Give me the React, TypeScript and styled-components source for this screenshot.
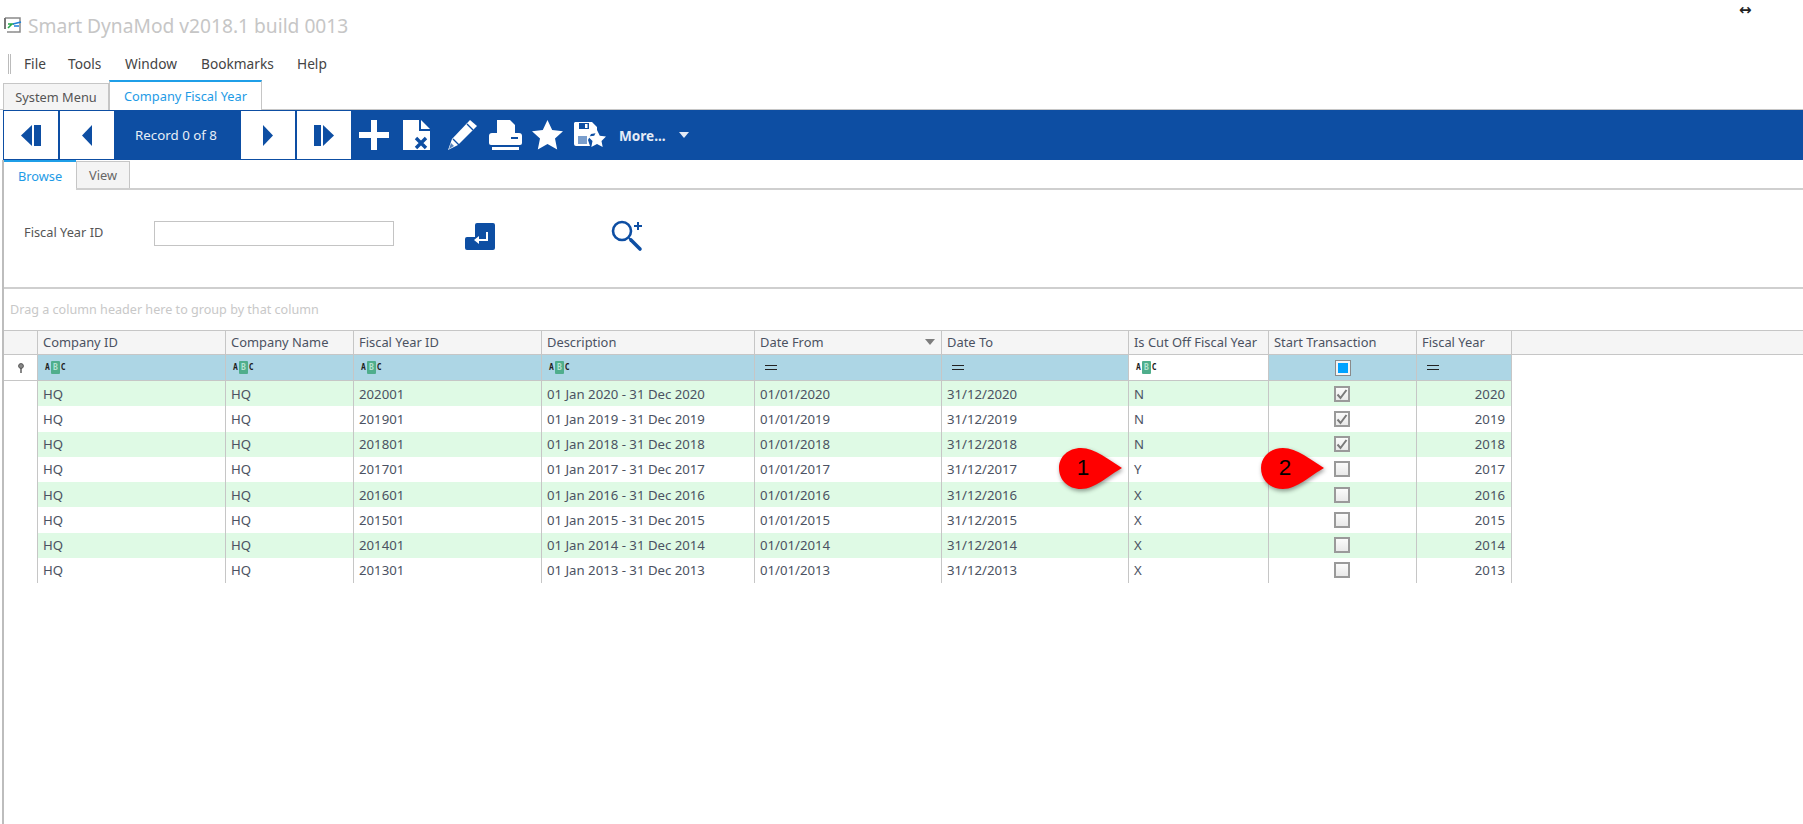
import React from "react";
import styled, { createGlobalStyle } from "styled-components";

const Global = createGlobalStyle`
  html, body { margin: 0; padding: 0; background: #fff; }
  body { font-family: "Noto Sans", "Open Sans", sans-serif; color: #4a4a4a; }
  * { box-sizing: border-box; }
`;

const BLUE = "#0d4ea3";
const LINE = "#c6c6c6";
const COLS = "34px 188px 128px 188px 213px 187px 187px 140px 148px 95px";

const Page = styled.div`
  position: relative;
  width: 1803px;
  height: 824px;
  overflow: hidden;
  display: flex;
  flex-direction: column;
`;

const TitleBar = styled.div`
  height: 50px;
  display: flex;
  align-items: center;
  gap: 5px;
  padding-left: 3px;
  position: relative;
`;
const TitleText = styled.div`
  font-size: 19.2px;
  color: #c6c6c6;
  white-space: nowrap;
`;
const ResizeCursor = styled.div`
  position: absolute;
  left: 1739px;
  top: 0;
  font-family: "DejaVu Sans", sans-serif;
  font-size: 15px;
  line-height: 20px;
  color: #222;
  font-weight: bold;
`;

const MenuBar = styled.div`
  height: 30px;
  display: flex;
  align-items: center;
  padding: 0 0 3px 8px;
`;
const Gripper = styled.div`
  width: 3px;
  height: 20px;
  border-left: 1px solid #bbb;
  border-right: 1px solid #bbb;
  margin-right: 13px;
`;
const MenuItem = styled.div<{ $w: number }>`
  width: ${(p) => p.$w}px;
  font-size: 13.7px;
  color: #444;
`;

const TabStrip = styled.div`
  height: 30px;
  display: flex;
  align-items: flex-end;
  padding-left: 3px;
  border-bottom: 1px solid ${LINE};
`;
const MainTab = styled.div<{ $active?: boolean; $w: number }>`
  width: ${(p) => p.$w}px;
  height: ${(p) => (p.$active ? 30 : 27)}px;
  margin-bottom: -1px;
  background: ${(p) => (p.$active ? "#fff" : "#f4f4f4")};
  border: 1px solid ${LINE};
  border-bottom: none;
  border-top: ${(p) => (p.$active ? "2px solid #1f9fe8" : `1px solid ${LINE}`)};
  color: ${(p) => (p.$active ? "#1e9be6" : "#555")};
  font-size: 12.8px;
  display: flex;
  align-items: center;
  justify-content: center;
`;

const Toolbar = styled.div`
  height: 50px;
  margin-left: 3px;
  padding-left: 1px;
  background: ${BLUE};
  display: flex;
  align-items: center;
`;
const NavButton = styled.div<{ $ml?: number }>`
  width: 54px;
  height: 48px;
  margin-left: ${(p) => p.$ml ?? 0}px;
  background: #fff;
  display: flex;
  align-items: center;
  justify-content: center;
`;
const RecordLabel = styled.div`
  width: 124px;
  margin-right: 3px;
  text-align: center;
  color: #e8eef7;
  font-size: 13.3px;
`;
const ToolIcon = styled.svg<{ $ml: number }>`
  display: block;
  margin-left: ${(p) => p.$ml}px;
  flex: none;
`;
const MoreLabel = styled.div`
  margin-left: 13px;
  color: #e4ebf6;
  font-size: 13.6px;
  font-weight: 700;
  width: 60px;
`;
const MoreArrow = styled.div`
  width: 0;
  height: 0;
  border-left: 5px solid transparent;
  border-right: 5px solid transparent;
  border-top: 6px solid #e4ebf6;
`;

const Content = styled.div`
  flex: 1;
  margin-left: 2px;
  border-left: 2px solid #bdbdbd;
  display: flex;
  flex-direction: column;
`;

const SubTabs = styled.div`
  height: 30px;
  display: flex;
  align-items: flex-end;
  border-bottom: 2px solid #cfcfcf;
`;
const BrowseTab = styled.div`
  width: 72px;
  height: 30px;
  margin-bottom: -2px;
  background: #fff;
  border-top: 2px solid #1f9fe8;
  color: #1e9be6;
  font-size: 12.8px;
  display: flex;
  align-items: center;
  justify-content: center;
`;
const ViewTab = styled.div`
  width: 54px;
  height: 27px;
  background: #f4f4f4;
  border: 1px solid ${LINE};
  border-bottom: none;
  color: #666;
  font-size: 12.8px;
  display: flex;
  align-items: center;
  justify-content: center;
`;

const FilterPanel = styled.div`
  height: 99px;
  padding: 30px 0 0 20px;
  display: flex;
  align-items: flex-start;
  border-bottom: 2px solid #cfcfcf;
`;
const FieldLabel = styled.div`
  width: 130px;
  height: 25px;
  line-height: 24px;
  font-size: 12.8px;
  color: #555;
`;
const FieldInput = styled.div`
  width: 240px;
  height: 25px;
  margin-top: 1px;
  border: 1px solid #c4c4c4;
  background: #fff;
`;
const PanelIcon = styled.svg<{ $ml: number; $mt?: number }>`
  display: block;
  margin-left: ${(p) => p.$ml}px;
  margin-top: ${(p) => p.$mt ?? 0}px;
  flex: none;
`;

const GroupPanel = styled.div`
  height: 41px;
  display: flex;
  align-items: center;
  padding-left: 6px;
  font-size: 12.6px;
  color: #c8c8c8;
`;

const Grid = styled.div`
  position: relative;
`;
const HeaderRow = styled.div`
  display: grid;
  grid-template-columns: ${COLS} 1fr;
  height: 25px;
  background: #f5f5f5;
  border-top: 1px solid ${LINE};
  border-bottom: 1px solid ${LINE};
`;
const HeaderCell = styled.div`
  border-right: 1px solid ${LINE};
  padding: 0 6px 2px 5px;
  font-size: 12.9px;
  color: #4b5262;
  white-space: nowrap;
  display: flex;
  align-items: center;
  justify-content: space-between;
`;
const SortArrow = styled.div`
  width: 0;
  height: 0;
  border-left: 5px solid transparent;
  border-right: 5px solid transparent;
  border-top: 6px solid #7d7d7d;
`;
const FilterRow = styled.div`
  display: grid;
  grid-template-columns: ${COLS};
  width: 1508px;
  height: 26px;
  border-bottom: 1px solid ${LINE};
`;
const FilterCell = styled.div<{ $white?: boolean; $center?: boolean }>`
  background: ${(p) => (p.$white ? "#fff" : "#add6e5")};
  border-right: 1px solid ${LINE};
  padding-left: ${(p) => (p.$center ? 0 : 7)}px;
  display: flex;
  align-items: center;
  justify-content: ${(p) => (p.$center ? "center" : "flex-start")};
`;
const AbcBadge = styled.div`
  display: flex;
  align-items: center;
  font-family: "DejaVu Sans Mono", monospace;
  font-size: 8px;
  font-weight: 700;
  color: #222;
  line-height: 1;
`;
const AbcMiddle = styled.span`
  width: 9px;
  height: 13px;
  margin: 0 1px;
  background: #4fae8c;
  color: #b5e2d2;
  border-radius: 1px;
  display: flex;
  align-items: center;
  justify-content: center;
`;
const EqualsIcon = styled.div`
  width: 12px;
  height: 5px;
  margin-left: 3px;
  border-top: 1.5px solid #222;
  border-bottom: 1.5px solid #222;
`;
const DataRow = styled.div`
  display: grid;
  grid-template-columns: ${COLS};
  width: 1508px;
  height: 25.25px;
`;
const DataCell = styled.div<{ $odd: boolean; $right?: boolean; $center?: boolean }>`
  background: ${(p) => (p.$odd ? "#dffae5" : "#fff")};
  border-right: 1px solid ${LINE};
  padding: 0 6px 0 5px;
  font-size: 13.2px;
  color: #4b5262;
  white-space: nowrap;
  display: flex;
  align-items: center;
  justify-content: ${(p) => (p.$right ? "flex-end" : p.$center ? "center" : "flex-start")};
`;
const IndicatorCell = styled.div`
  background: #fff;
  border-right: 1px solid ${LINE};
`;
const CheckBox = styled.div`
  width: 16px;
  height: 16px;
  border: 2px solid #9a9a9a;
  background: linear-gradient(#fbfbfb, #e9e9e9);
  display: flex;
  align-items: center;
  justify-content: center;
`;
const FilterCheck = styled.div`
  width: 16px;
  height: 16px;
  border: 1px solid #8a8a8a;
  background: #f4f4f4;
  display: flex;
  align-items: center;
  justify-content: center;
`;
const FilterCheckFill = styled.div`
  width: 10px;
  height: 10px;
  background: #00a2ff;
`;

const Callout = styled.div<{ $left: number }>`
  position: absolute;
  left: ${(p) => p.$left}px;
  top: 118px;
  width: 64px;
  height: 44px;
`;
const CalloutShape = styled.svg`
  position: absolute;
  inset: 0;
  filter: drop-shadow(1px 2px 2px rgba(0, 0, 0, 0.4));
`;
const CalloutNumber = styled.div`
  position: absolute;
  left: 0;
  top: 0;
  width: 48px;
  height: 40px;
  display: flex;
  align-items: center;
  justify-content: center;
  font-family: "Liberation Sans", sans-serif;
  font-size: 22.5px;
  color: #000;
`;

const columns = [
  "Company ID",
  "Company Name",
  "Fiscal Year ID",
  "Description",
  "Date From",
  "Date To",
  "Is Cut Off Fiscal Year",
  "Start Transaction",
  "Fiscal Year",
];

const rows = [
  { y: 2020, cut: "N", on: true },
  { y: 2019, cut: "N", on: true },
  { y: 2018, cut: "N", on: true },
  { y: 2017, cut: "Y", on: false },
  { y: 2016, cut: "X", on: false },
  { y: 2015, cut: "X", on: false },
  { y: 2014, cut: "X", on: false },
  { y: 2013, cut: "X", on: false },
];

const AppLogo = () => (
  <svg width="20" height="20" viewBox="0 0 20 20">
    <path d="M2 3h15v14H4" fill="#fff" stroke="#8a8a8a" strokeWidth="1.5" />
    <path d="M2 3v11" stroke="#777" strokeWidth="2" fill="none" />
    <path d="M5 9h6M5 13l4-4" stroke="#27a84a" strokeWidth="1.6" fill="none" />
    <path d="M10 9l8-2M11 11l5 0" stroke="#1f7fd6" strokeWidth="1.6" fill="none" />
    <path d="M5 17h10" stroke="#aaa" strokeWidth="1.5" strokeDasharray="2 2" fill="none" />
  </svg>
);

const NavIcon = ({ dir, bar }: { dir: "l" | "r"; bar?: boolean }) => (
  <svg width="20" height="21" viewBox="0 0 20 21">
    {dir === "l" ? (
      <>
        <path d={bar ? "M11 0v21L0 10.5z" : "M15 0v21L5 10.5z"} fill={BLUE} />
        {bar && <rect x="13" y="0" width="7" height="21" fill={BLUE} />}
      </>
    ) : (
      <>
        <path d={bar ? "M9 0v21l11-10.5z" : "M5 0v21l10-10.5z"} fill={BLUE} />
        {bar && <rect x="0" y="0" width="7" height="21" fill={BLUE} />}
      </>
    )}
  </svg>
);

const Check = () => (
  <svg width="12" height="12" viewBox="0 0 12 12">
    <path d="M1.5 6.5l3 3.5 6-8" fill="none" stroke="#7a7a7a" strokeWidth="2" />
  </svg>
);

const Abc = () => (
  <AbcBadge>
    <span>A</span>
    <AbcMiddle>B</AbcMiddle>
    <span>C</span>
  </AbcBadge>
);

const Teardrop = () => (
  <CalloutShape width="64" height="44" viewBox="0 0 64 44">
    <path
      d="M22 0C36 0 50 12 63 20C50 27 36 41 22 41C9 41 0 32 0 20C0 9 9 0 22 0Z"
      fill="#ff0000"
    />
  </CalloutShape>
);

export default function App() {
  return (
    <Page>
      <Global />
      <TitleBar>
        <AppLogo />
        <TitleText>Smart DynaMod v2018.1 build 0013</TitleText>
        <ResizeCursor>↔</ResizeCursor>
      </TitleBar>
      <MenuBar>
        <Gripper />
        <MenuItem $w={44}>File</MenuItem>
        <MenuItem $w={57}>Tools</MenuItem>
        <MenuItem $w={76}>Window</MenuItem>
        <MenuItem $w={96}>Bookmarks</MenuItem>
        <MenuItem $w={40}>Help</MenuItem>
      </MenuBar>
      <TabStrip>
        <MainTab $w={106}>System Menu</MainTab>
        <MainTab $active $w={153}>Company Fiscal Year</MainTab>
      </TabStrip>
      <Toolbar>
        <NavButton><NavIcon dir="l" bar /></NavButton>
        <NavButton $ml={2}><NavIcon dir="l" /></NavButton>
        <RecordLabel>Record 0 of 8</RecordLabel>
        <NavButton><NavIcon dir="r" /></NavButton>
        <NavButton $ml={2}><NavIcon dir="r" bar /></NavButton>
        <ToolIcon $ml={7} width="32" height="32" viewBox="0 0 32 32">
          <path d="M13 1h6v12h12v6H19v12h-6V19H1v-6h12z" fill="#fff" />
        </ToolIcon>
        <ToolIcon $ml={12} width="29" height="32" viewBox="0 0 29 32">
          <path d="M1 1h16v11h11v19H1z" fill="#fff" />
          <path d="M19 1l9 9h-9z" fill="#fff" />
          <path d="M14 19l10 10M24 19L14 29" stroke={BLUE} strokeWidth="3.4" fill="none" />
        </ToolIcon>
        <ToolIcon $ml={15} width="32" height="32" viewBox="0 0 32 32">
          <path d="M24 1l7 6L12 26 2 31l4-11z" fill="#fff" />
          <path d="M7 20l6 6M21 5l6 6" stroke={BLUE} strokeWidth="1.4" fill="none" />
          <path d="M5 24l3 3-5 3z" fill={BLUE} opacity="0.7" />
        </ToolIcon>
        <ToolIcon $ml={11} width="33" height="32" viewBox="0 0 33 32">
          <path d="M8 1h13l5 5v8H8z" fill="#fff" />
          <path d="M3 14h27a3 3 0 0 1 3 3v7a2 2 0 0 1-2 2H2a2 2 0 0 1-2-2v-7a3 3 0 0 1 3-3z" fill="#fff" />
          <rect x="22" y="18" width="7" height="2" fill={BLUE} />
          <rect x="3" y="28" width="27" height="3" fill="#fff" />
        </ToolIcon>
        <ToolIcon $ml={10} width="31" height="30" viewBox="0 0 31 30">
          <path d="M15.5 0l4.7 10 10.8 1.3-8 7.3 2.2 10.9-9.7-5.5-9.7 5.5L8 18.6 0 11.3 10.8 10z" fill="#fff" />
        </ToolIcon>
        <ToolIcon $ml={11} width="32" height="26" viewBox="0 0 32 26">
          <path d="M1 0h17l5 5v6l-6 1-3 6 2 6H2a2 2 0 0 1-2-2V1z" fill="#fff" />
          <rect x="5" y="1" width="10" height="6" fill={BLUE} />
          <rect x="11" y="2" width="2.5" height="4" fill="#fff" />
          <rect x="4" y="14" width="9" height="8" fill={BLUE} opacity="0.55" />
          <path d="M23 8l2.8 5.8 6.2.8-4.5 4.3 1.2 6.1-5.7-3.1-5.7 3.1 1.2-6.1-4.5-4.3 6.2-.8z" fill="#fff" />
        </ToolIcon>
        <MoreLabel>More...</MoreLabel>
        <MoreArrow />
      </Toolbar>
      <Content>
        <SubTabs>
          <BrowseTab>Browse</BrowseTab>
          <ViewTab>View</ViewTab>
        </SubTabs>
        <FilterPanel>
          <FieldLabel>Fiscal Year ID</FieldLabel>
          <FieldInput />
          <PanelIcon $ml={71} $mt={3} width="30" height="27" viewBox="0 0 30 27">
            <path d="M10 2a2 2 0 0 1 2-2h16a2 2 0 0 1 2 2v23a2 2 0 0 1-2 2H2a2 2 0 0 1-2-2v-9a2 2 0 0 1 2-2h8z" fill={BLUE} />
            <path d="M22 9v8H12" fill="none" stroke="#fff" strokeWidth="2" />
            <path d="M14 13l-5 4 5 4z" fill="#fff" />
          </PanelIcon>
          <PanelIcon $ml={116} width="32" height="32" viewBox="0 0 32 32">
            <circle cx="11" cy="11" r="9" fill="none" stroke={BLUE} strokeWidth="2.6" />
            <path d="M18 18l2 2" stroke={BLUE} strokeWidth="2" />
            <path d="M20 20l9 9" stroke={BLUE} strokeWidth="3.6" strokeLinecap="round" />
            <path d="M27 2v8M23 6h8" stroke={BLUE} strokeWidth="2" />
          </PanelIcon>
        </FilterPanel>
        <GroupPanel>Drag a column header here to group by that column</GroupPanel>
        <Grid>
          <HeaderRow>
            <HeaderCell />
            {columns.map((c) => (
              <HeaderCell key={c}>
                {c}
                {c === "Date From" && <SortArrow />}
              </HeaderCell>
            ))}
            <div />
          </HeaderRow>
          <FilterRow>
            <FilterCell $white $center>
              <svg width="8" height="10" viewBox="0 0 8 10">
                <circle cx="4" cy="3" r="2.4" fill="#888" stroke="#555" />
                <path d="M4 5v5" stroke="#555" strokeWidth="1.4" />
              </svg>
            </FilterCell>
            <FilterCell><Abc /></FilterCell>
            <FilterCell><Abc /></FilterCell>
            <FilterCell><Abc /></FilterCell>
            <FilterCell><Abc /></FilterCell>
            <FilterCell><EqualsIcon /></FilterCell>
            <FilterCell><EqualsIcon /></FilterCell>
            <FilterCell $white><Abc /></FilterCell>
            <FilterCell $center>
              <FilterCheck><FilterCheckFill /></FilterCheck>
            </FilterCell>
            <FilterCell><EqualsIcon /></FilterCell>
          </FilterRow>
          {rows.map((r, i) => {
            const odd = i % 2 === 0;
            return (
              <DataRow key={r.y}>
                <IndicatorCell />
                <DataCell $odd={odd}>HQ</DataCell>
                <DataCell $odd={odd}>HQ</DataCell>
                <DataCell $odd={odd}>{r.y}01</DataCell>
                <DataCell $odd={odd}>{`01 Jan ${r.y} - 31 Dec ${r.y}`}</DataCell>
                <DataCell $odd={odd}>{`01/01/${r.y}`}</DataCell>
                <DataCell $odd={odd}>{`31/12/${r.y}`}</DataCell>
                <DataCell $odd={odd}>{r.cut}</DataCell>
                <DataCell $odd={odd} $center>
                  <CheckBox>{r.on && <Check />}</CheckBox>
                </DataCell>
                <DataCell $odd={odd} $right>{r.y}</DataCell>
              </DataRow>
            );
          })}
          <Callout $left={1055}>
            <Teardrop />
            <CalloutNumber>1</CalloutNumber>
          </Callout>
          <Callout $left={1257}>
            <Teardrop />
            <CalloutNumber>2</CalloutNumber>
          </Callout>
        </Grid>
      </Content>
    </Page>
  );
}
